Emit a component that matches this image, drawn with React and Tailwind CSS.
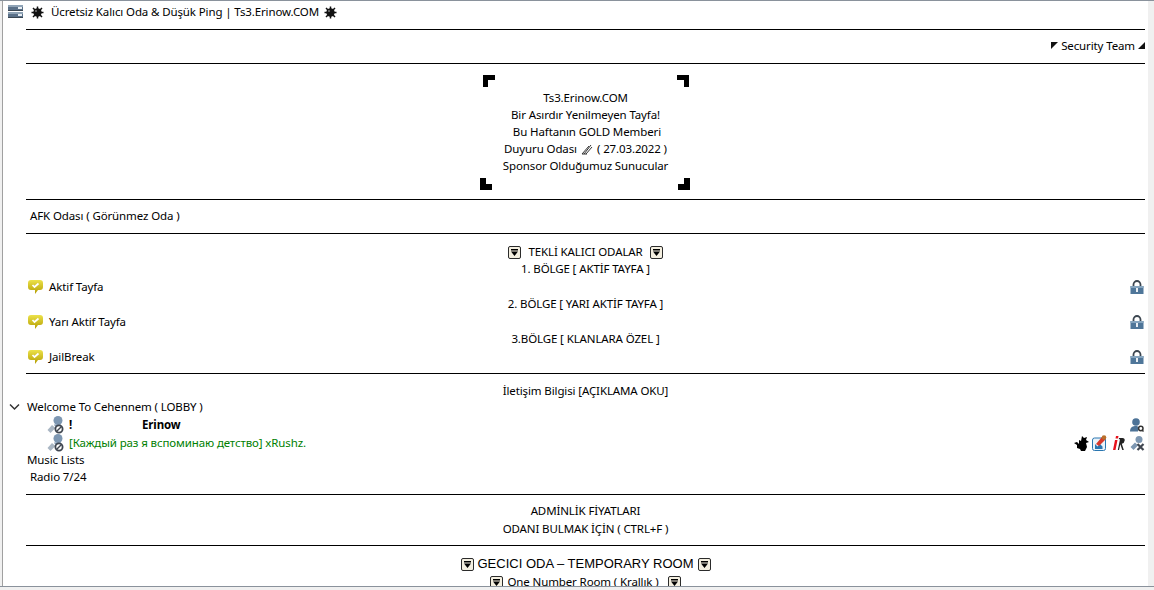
function ServerIcon() {
  return (
    <svg width="15" height="14" viewBox="0 0 15 14">
      <rect x="0" y="0" width="15" height="6" fill="#5a7088" />
      <rect x="0" y="0" width="15" height="2" fill="#8fa3b6" />
      <rect x="10" y="2" width="4" height="2" fill="#e8eef3" />
      <rect x="0" y="5" width="15" height="1" fill="#3a4652" />
      <rect x="0" y="7" width="15" height="6" fill="#5a7088" />
      <rect x="0" y="7" width="15" height="2" fill="#8fa3b6" />
      <rect x="10" y="9" width="4" height="2" fill="#e8eef3" />
      <rect x="0" y="12" width="15" height="1" fill="#3a4652" />
    </svg>
  );
}

function Spot() {
  return (
    <svg width="13" height="13" viewBox="0 0 13 13">
      <path d="M6.500 0.500v12M0.500 6.500h12M2 2l9 9M11 2l-9 9" stroke="#111" strokeWidth="1.500" />
      <circle cx="6.500" cy="6.500" r="4.200" fill="#111" />
      <circle cx="5" cy="5" r="1" fill="#777" />
    </svg>
  );
}

function Tri({ flip }) {
  return (
    <svg width="7" height="7" viewBox="0 0 7 7">
      <polygon points={flip ? "7,0 7,7 0,7" : "0,0 7,0 0,7"} fill="#111" />
    </svg>
  );
}

function Corner({ r }) {
  const t = {
    tl: "0,0 12,0 12,5 5,5 5,12 0,12",
    tr: "0,0 12,0 12,12 7,12 7,5 0,5",
    bl: "0,0 6,0 6,6 12,6 12,12 0,12",
    br: "6,0 12,0 12,12 0,12 0,6 6,6",
  };
  return (
    <svg width="12" height="13" viewBox="0 0 12 13">
      <polygon points={t[r]} fill="#000" />
    </svg>
  );
}

function Down() {
  return (
    <svg width="13" height="13" viewBox="0 0 13 13">
      <rect x="0.500" y="0.500" width="12" height="12" rx="1.500" fill="#f4efe0" stroke="#2b2b2b" />
      <path d="M3 3h7v1.500H3zM3 5.500h7L6.500 10z" fill="#000" />
    </svg>
  );
}

function Bubble() {
  return (
    <svg width="15" height="14" viewBox="0 0 15 14">
      <defs>
        <linearGradient id="bub" x1="0" y1="0" x2="0" y2="1">
          <stop offset="0" stopColor="#ece24a" />
          <stop offset="1" stopColor="#b39c00" />
        </linearGradient>
      </defs>
      <path d="M3 0h9a3 3 0 0 1 3 3v4a3 3 0 0 1-3 3H10l-3 4v-4H3a3 3 0 0 1-3-3V3a3 3 0 0 1 3-3z" fill="url(#bub)" />
      <path d="M4.500 5l2 2 4-3.500" stroke="#fff" strokeWidth="1.700" fill="none" />
    </svg>
  );
}

function Lock() {
  return (
    <svg width="14" height="14" viewBox="0 0 14 14">
      <path d="M3.500 7V4.500a3.500 3.500 0 0 1 7 0V7" stroke="#3c4650" strokeWidth="1.800" fill="none" />
      <rect x="0.500" y="6" width="13" height="8" fill="#4f7699" />
      <rect x="0.500" y="6" width="13" height="2" fill="#86a5bf" />
      <rect x="6" y="8" width="2" height="4" fill="#e8eef4" />
    </svg>
  );
}

function Muted() {
  return (
    <svg width="18" height="18" viewBox="0 0 18 18">
      <circle cx="11" cy="4.500" r="4.500" fill="#7d97b2" />
      <path d="M7 8.500h7v2H8z" fill="#7d97b2" />
      <path d="M0.500 14l4.500-5 3.500 3-5 5z" fill="#a9b6c3" />
      <circle cx="12" cy="13" r="3.600" fill="#fff" stroke="#3f4650" strokeWidth="1.800" />
      <path d="M9.500 15.500l5-5" stroke="#3f4650" strokeWidth="1.500" />
    </svg>
  );
}

function UserQ() {
  return (
    <svg width="14" height="14" viewBox="0 0 14 14">
      <circle cx="6" cy="4" r="3.800" fill="#4d7397" />
      <path d="M0 13.500c0-4.500 3-5.500 6-5.500 1 0 2 0 2 1v4.500z" fill="#4d7397" />
      <circle cx="10.800" cy="10.500" r="2.200" fill="none" stroke="#333" strokeWidth="1.500" />
      <path d="M12 12l1.500 1.500" stroke="#333" strokeWidth="1.400" />
    </svg>
  );
}

function MicX() {
  return (
    <svg width="15" height="15" viewBox="0 0 15 15">
      <circle cx="9" cy="3.500" r="3.500" fill="#7d97b2" />
      <path d="M0.500 11l4.500-4.500 3 3-4.500 4.500z" fill="#7d97b2" />
      <path d="M7.500 8l6 6M13.500 8l-6 6" stroke="#3f4650" strokeWidth="2.200" />
    </svg>
  );
}

function Bird() {
  return (
    <svg width="15" height="15" viewBox="0 0 15 15">
      <path d="M0 7l3-1 2 2 0-4 2 1 1-5 2 2 3-1-1 3 3 2-3 1 1 4-2 4H7L6 13 3 12 3 9z" fill="#000" />
    </svg>
  );
}

function Badge() {
  return (
    <svg width="16" height="16" viewBox="0 0 16 16">
      <rect x="0.500" y="3" width="13" height="12.500" rx="2" fill="#eaf3fa" stroke="#2a76b0" />
      <path d="M3 14V9l2.500 2.500L8 9l2.500 2.500V14z" fill="#2a76b0" />
      <path d="M4 9l6-7 4 0-1 3-6 6z" fill="#d8382b" />
      <circle cx="12" cy="2.500" r="2.300" fill="#b9702c" />
    </svg>
  );
}

function IR() {
  return (
    <svg width="12" height="15" viewBox="0 0 12 15">
      <path d="M3 0h2.500L5 2.500H2.500zM2 4h2.500L2.500 14H0z" fill="#e8121c" />
      <path d="M6 2h3.500q2.500 0 2.200 2.600T8.800 7.800L10.800 14H9.300L7.300 8.300 6 14H4.800L7 3.300H5.800z" fill="#222" />
    </svg>
  );
}

function Quill() {
  return (
    <svg width="12" height="12" viewBox="0 0 12 12">
      <path d="M1 11L8 3M3 11L10 2M5 11l6-7M1 11h5" stroke="#333" strokeWidth="1" fill="none" />
    </svg>
  );
}

function Line({ cls }) {
  return (
    <div className={`pl-[23px] pr-[3px] ${cls}`}>
      <div className="h-px w-full bg-black" />
    </div>
  );
}

function Center({ children, cls = "h-[17px] pb-[2px]" }) {
  return (
    <div className={`flex items-center justify-center whitespace-pre pl-[23px] pr-[3px] ${cls}`}>
      {children}
    </div>
  );
}

function Chan({ name }) {
  return (
    <div className="flex h-[18px] items-center justify-between pl-[25px] pr-[4px]">
      <div className="flex items-center gap-[6px]">
        <Bubble />
        <span>{name}</span>
      </div>
      <Lock />
    </div>
  );
}

export default function App() {
  return (
    <div className="h-[590px] w-[1154px] overflow-hidden bg-[#f0f0f0] font-['Noto_Sans','Open_Sans',sans-serif] text-[11.5px] tracking-[-0.12px] text-black">
      <div className="h-[587px] overflow-hidden border-t border-b border-[#8a929c] bg-[#f0f0f0]">
        <div className="ml-[2px] h-[590px] w-[1146px] overflow-hidden border-l border-[#a0a0a0] bg-white pt-[2px]">
          <div className="flex h-[18px] items-center pl-[5px]">
            <ServerIcon />
            <div className="ml-[8px]"><Spot /></div>
            <span className="ml-[7px] mr-[5px]">Ücretsiz Kalıcı Oda &amp; Düşük Ping | Ts3.Erinow.COM</span>
            <Spot />
          </div>
          <Line cls="h-[16px] pt-[8px]" />
          <div className="flex h-[17px] items-center justify-end gap-[3px] pr-[3px]">
            <Tri />
            <span>Security Team</span>
            <Tri flip />
          </div>
          <Line cls="h-[18px] pt-[9px]" />
          <div className="flex h-[18px] items-center pl-[480px]">
            <Corner r="tl" />
            <div className="ml-[182px]"><Corner r="tr" /></div>
          </div>
          <Center>Ts3.Erinow.COM</Center>
          <Center>Bir Asırdır Yenilmeyen Tayfa!</Center>
          <Center> Bu Haftanın GOLD Memberi</Center>
          <Center>
            <span>Duyuru Odası</span>
            <span className="mx-[4px]"><Quill /></span>
            <span>( 27.03.2022 )</span>
          </Center>
          <Center>Sponsor Olduğumuz Sunucular</Center>
          <div className="flex h-[18px] items-center pl-[477px]">
            <Corner r="bl" />
            <div className="ml-[186px]"><Corner r="br" /></div>
          </div>
          <Line cls="h-[14px] pt-[6px]" />
          <div className="flex h-[17px] items-center pl-[27px]">AFK Odası ( Görünmez Oda )</div>
          <Line cls="h-[19px] pt-[9px]" />
          <Center cls="h-[18px]">
            <Down />
            <span className="mx-[7px]">TEKLİ KALICI ODALAR</span>
            <Down />
          </Center>
          <Center>1. BÖLGE [ AKTİF TAYFA ]</Center>
          <Chan name="Aktif Tayfa" />
          <Center>2. BÖLGE [ YARI AKTİF TAYFA ]</Center>
          <Chan name="Yarı Aktif Tayfa" />
          <Center>3.BÖLGE [ KLANLARA ÖZEL ]</Center>
          <Chan name="JailBreak" />
          <Line cls="h-[17px] pt-[7px]" />
          <Center>İletişim Bilgisi [AÇIKLAMA OKU]</Center>
          <div className="flex h-[16px] items-center pb-[2px] pl-[6px]">
            <svg width="11" height="8" viewBox="0 0 11 8">
              <path d="M1 1.500l4.500 4.500L10 1.500" stroke="#333" strokeWidth="1.500" fill="none" />
            </svg>
            <span className="ml-[7px]">Welcome To Cehennem ( LOBBY )</span>
          </div>
          <div className="flex h-[18px] items-center justify-between pl-[44px] pr-[4px]">
            <div className="flex items-center font-bold">
              <Muted />
              <span className="ml-[4px] w-[73px]">!</span>
              <span>Erinow</span>
            </div>
            <UserQ />
          </div>
          <div className="flex h-[18px] items-center justify-between pl-[44px] pr-[3px]">
            <div className="flex items-center text-[#008000]">
              <Muted />
              <span className="ml-[4px]">[Каждый раз я вспоминаю детство] xRushz.</span>
            </div>
            <div className="flex items-center gap-[3px]">
              <Bird />
              <Badge />
              <div className="mx-[2px]"><IR /></div>
              <MicX />
            </div>
          </div>
          <div className="flex h-[17px] items-center pb-[2px] pl-[24px]">Music Lists</div>
          <div className="flex h-[17px] items-center pb-[2px] pl-[27px]">Radio 7/24</div>
          <Line cls="h-[17px] pt-[8px]" />
          <Center>ADMİNLİK FİYATLARI</Center>
          <Center cls="h-[18px]">ODANI BULMAK İÇİN ( CTRL+F )</Center>
          <Line cls="h-[17px] pt-[7px]" />
          <Center cls="h-[18px]">
            <Down />
            <span className="mx-[4px] font-['Liberation_Sans',sans-serif] text-[13px] tracking-normal">GECICI ODA – TEMPORARY ROOM</span>
            <Down />
          </Center>
          <Center cls="h-[18px]">
            <Down />
            <span className="ml-[4px] mr-[9px]">One Number Room ( Krallık )</span>
            <Down />
          </Center>
        </div>
      </div>
    </div>
  );
}
